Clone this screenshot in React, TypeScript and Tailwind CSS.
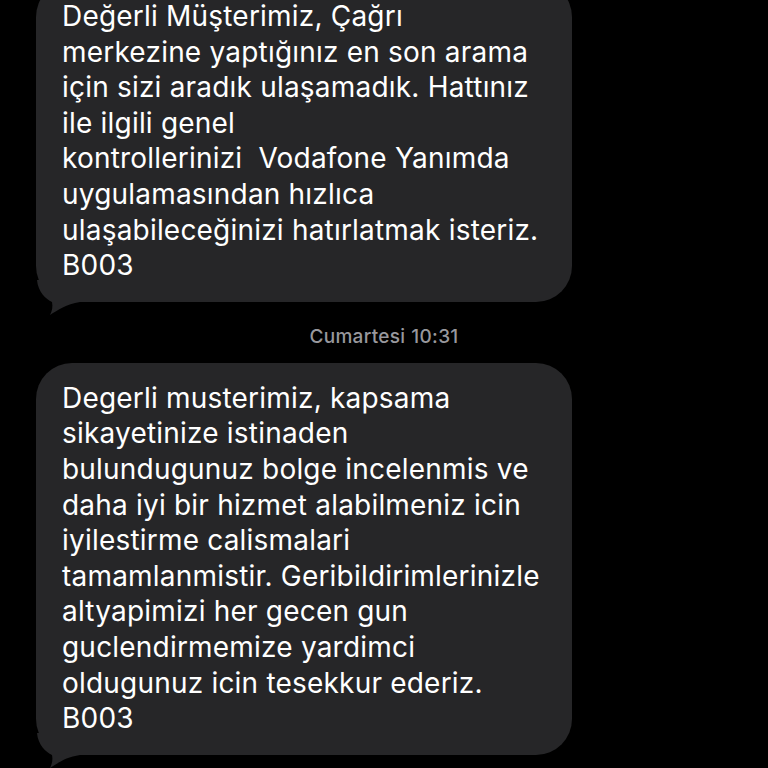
const first = [
  'Değerli Müşterimiz, Çağrı',
  'merkezine yaptığınız en son arama',
  'için sizi aradık ulaşamadık. Hattınız',
  'ile ilgili genel',
  'kontrollerinizi  Vodafone Yanımda',
  'uygulamasından hızlıca',
  'ulaşabileceğinizi hatırlatmak isteriz.',
  'B003',
]

const second = [
  'Degerli musterimiz, kapsama',
  'sikayetinize istinaden',
  'bulundugunuz bolge incelenmis ve',
  'daha iyi bir hizmet alabilmeniz icin',
  'iyilestirme calismalari',
  'tamamlanmistir. Geribildirimlerinizle',
  'altyapimizi her gecen gun',
  'guclendirmemize yardimci',
  'oldugunuz icin tesekkur ederiz.',
  'B003',
]

function Tail() {
  return (
    <svg
      className="absolute left-0 bottom-[-14px]"
      width="44"
      height="36"
      viewBox="0 0 44 36"
    >
      <path
        d="M1 0 C2 12 10 19 16 22 C17 27 16 31 14 35 C22 30 30 24 44 22 L44 0 Z"
        fill="#262628"
      />
    </svg>
  )
}

function Bubble({ lines }: { lines: string[] }) {
  return (
    <div className="relative w-[536px] rounded-[36px] bg-[#262628] px-[26px] py-[18px]">
      <div className="text-[28px] leading-[35.6px] tracking-[0.2px] text-white whitespace-pre">
        {lines.map((l, i) => (
          <div key={i}>{l}</div>
        ))}
      </div>
      <Tail />
    </div>
  )
}

export default function App() {
  return (
    <div
      className="h-[768px] w-[768px] overflow-hidden bg-black"
      style={{ fontFamily: 'Inter, "Noto Sans", sans-serif' }}
    >
      <div className="ml-[36px] mt-[-19px]">
        <Bubble lines={first} />
      </div>
      <div className="flex h-[61px] items-center justify-center pt-[10px] text-[19px] font-medium tracking-[0.3px] text-[#98989d]">
        <span>Cumartesi</span>
        <span className="ml-[6px]">10:31</span>
      </div>
      <div className="ml-[36px]">
        <Bubble lines={second} />
      </div>
    </div>
  )
}
